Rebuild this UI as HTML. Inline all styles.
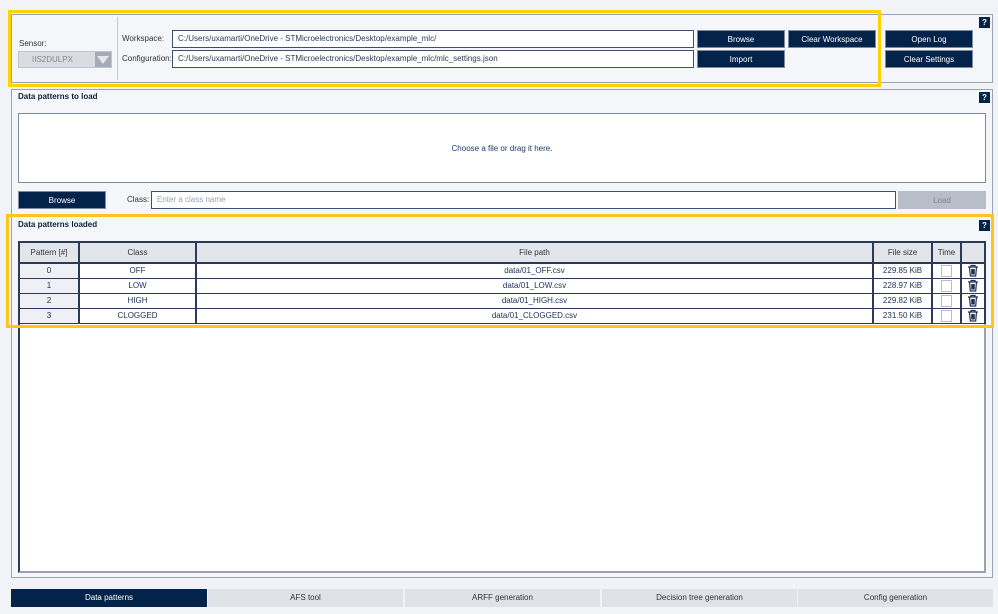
<!DOCTYPE html><html><head><style>
*{box-sizing:border-box;margin:0;padding:0}
body{width:998px;height:614px;background:#f2f3f6;font-family:"Liberation Sans",sans-serif;font-size:8px;color:#222;position:relative;overflow:hidden}
.a{position:absolute}
.panel{position:absolute;border:1px solid #9aa3b3;background:#f5f6f9}
.btn{position:absolute;background:#03234b;color:#fff;text-align:center;font-size:8px;line-height:17px;border:1px solid #7d8aa0}
.inp{position:absolute;background:#fff;border:1px solid #3d4f6d;font-size:8px;padding-left:5px;line-height:16px;color:#2a3a58}
.q{position:absolute;width:11px;height:11px;background:#03234b;color:#fff;font-size:8px;font-weight:bold;text-align:center;line-height:11px}
.lbl{position:absolute;font-size:8px;color:#333}
.t{font-weight:bold;font-size:8px;color:#0f1f3a}
table{border-collapse:collapse;position:absolute;left:18px;top:241px;width:968px}
td,th{border:2px solid #2a3a58;font-size:8px;text-align:center;color:#1d3055;font-weight:normal;padding:0}
th{height:21px;background:#e2e5ea;color:#333}
td{height:15px;background:#fff;border-width:1px 2px}
td.p{background:#eef0f3}
.cb{display:inline-block;width:11px;height:12px;border:1px solid #b8bec8;background:#fff;vertical-align:middle}
.tab{position:absolute;top:589px;height:18px;width:196px;background:#dfe2e7;color:#333;text-align:center;font-size:8px;line-height:18px;border-left:1px solid #f2f3f6}
svg{vertical-align:middle}
</style></head><body>
<div class="panel" style="left:11px;top:14px;width:982px;height:69px"></div>
<div class="a" style="left:117px;top:17px;width:1px;height:63px;background:#c4c9d2"></div>
<div class="lbl" style="left:19px;top:39px">Sensor:</div>
<div class="a" style="left:18px;top:51px;width:94px;height:17px;background:#d9dce2;border:1px solid #c0c5cd;color:#888;font-size:8px;line-height:15px;padding-left:13px">IIS2DULPX</div>
<div class="a" style="left:95px;top:52px;width:16px;height:15px;background:#a5acb8"><div style="margin:4px auto 0;width:0;height:0;border-left:6px solid transparent;border-right:6px solid transparent;border-top:8px solid #e6e8ec"></div></div>
<div class="lbl" style="left:122px;top:34px">Workspace:</div>
<div class="lbl" style="left:122px;top:54px">Configuration:</div>
<div class="inp" style="left:172px;top:30px;width:522px;height:18px">C:/Users/uxamarti/OneDrive - STMicroelectronics/Desktop/example_mlc/</div>
<div class="inp" style="left:172px;top:50px;width:522px;height:18px">C:/Users/uxamarti/OneDrive - STMicroelectronics/Desktop/example_mlc/mlc_settings.json</div>
<div class="btn" style="left:697px;top:30px;width:88px;height:18px">Browse</div>
<div class="btn" style="left:788px;top:30px;width:88px;height:18px">Clear Workspace</div>
<div class="btn" style="left:885px;top:30px;width:88px;height:18px">Open Log</div>
<div class="btn" style="left:697px;top:50px;width:88px;height:18px">Import</div>
<div class="btn" style="left:885px;top:50px;width:88px;height:18px">Clear Settings</div>
<div class="q" style="left:979px;top:17px">?</div>
<div class="a" style="left:8px;top:10px;width:873px;height:77px;border:3px solid #ffd200"></div>

<div class="panel" style="left:11px;top:89px;width:982px;height:489px"></div>
<div class="a t" style="left:18px;top:92px">Data patterns to load</div>
<div class="q" style="left:979px;top:92px">?</div>
<div class="a" style="left:18px;top:113px;width:968px;height:70px;background:#fff;border:1px solid #7d8aa0;text-align:center;line-height:70px;color:#1d3a6b;font-size:8px">Choose a file or drag it here.</div>
<div class="btn" style="left:18px;top:191px;width:88px;height:18px">Browse</div>
<div class="lbl" style="left:127px;top:195px">Class:</div>
<div class="inp" style="left:151px;top:191px;width:745px;height:18px;color:#9aa2b0">Enter a class name</div>
<div class="btn" style="left:898px;top:191px;width:88px;height:18px;background:#b8bec8;color:#7d8594;border-color:#b8bec8">Load</div>
<div class="a" style="left:11px;top:215px;width:982px;height:1px;background:#c4c9d2"></div>
<div class="a t" style="left:18px;top:220px">Data patterns loaded</div>
<div class="q" style="left:979px;top:220px">?</div>
<div class="a" style="left:18px;top:241px;width:968px;height:332px;background:#fff;border:2px solid #2a3a58;border-right-color:#9aa3b3;border-bottom-color:#9aa3b3"></div>
<table>
<tr><th style="width:60px">Pattern [#]</th><th style="width:117px">Class</th><th>File path</th><th style="width:59px">File size</th><th style="width:29px">Time</th><th style="width:24px"></th></tr>
<tr><td class="p">0</td><td>OFF</td><td>data/01_OFF.csv</td><td>229.85 KiB</td><td><span class="cb"></span></td><td><svg width="12" height="13" viewBox="0 0 12 13" fill="none" stroke="#1d3055" stroke-width="1.2"><path d="M1 3h10M4 3V1.5h4V3M2.5 3l.8 9h5.4l.8-9M4.8 5v5.5M6 5v5.5M7.2 5v5.5"/></svg></td></tr>
<tr><td class="p">1</td><td>LOW</td><td>data/01_LOW.csv</td><td>228.97 KiB</td><td><span class="cb"></span></td><td><svg width="12" height="13" viewBox="0 0 12 13" fill="none" stroke="#1d3055" stroke-width="1.2"><path d="M1 3h10M4 3V1.5h4V3M2.5 3l.8 9h5.4l.8-9M4.8 5v5.5M6 5v5.5M7.2 5v5.5"/></svg></td></tr>
<tr><td class="p">2</td><td>HIGH</td><td>data/01_HIGH.csv</td><td>229.82 KiB</td><td><span class="cb"></span></td><td><svg width="12" height="13" viewBox="0 0 12 13" fill="none" stroke="#1d3055" stroke-width="1.2"><path d="M1 3h10M4 3V1.5h4V3M2.5 3l.8 9h5.4l.8-9M4.8 5v5.5M6 5v5.5M7.2 5v5.5"/></svg></td></tr>
<tr><td class="p">3</td><td>CLOGGED</td><td>data/01_CLOGGED.csv</td><td>231.50 KiB</td><td><span class="cb"></span></td><td><svg width="12" height="13" viewBox="0 0 12 13" fill="none" stroke="#1d3055" stroke-width="1.2"><path d="M1 3h10M4 3V1.5h4V3M2.5 3l.8 9h5.4l.8-9M4.8 5v5.5M6 5v5.5M7.2 5v5.5"/></svg></td></tr>
</table>
<div class="a" style="left:6px;top:214px;width:988px;height:114px;border:3px solid #ffc61a"></div>

<div class="tab" style="left:11px;background:#03234b;color:#fff;border:none">Data patterns</div>
<div class="tab" style="left:207px">AFS tool</div>
<div class="tab" style="left:404px">ARFF generation</div>
<div class="tab" style="left:601px">Decision tree generation</div>
<div class="tab" style="left:797px">Config generation</div>
</body></html>
